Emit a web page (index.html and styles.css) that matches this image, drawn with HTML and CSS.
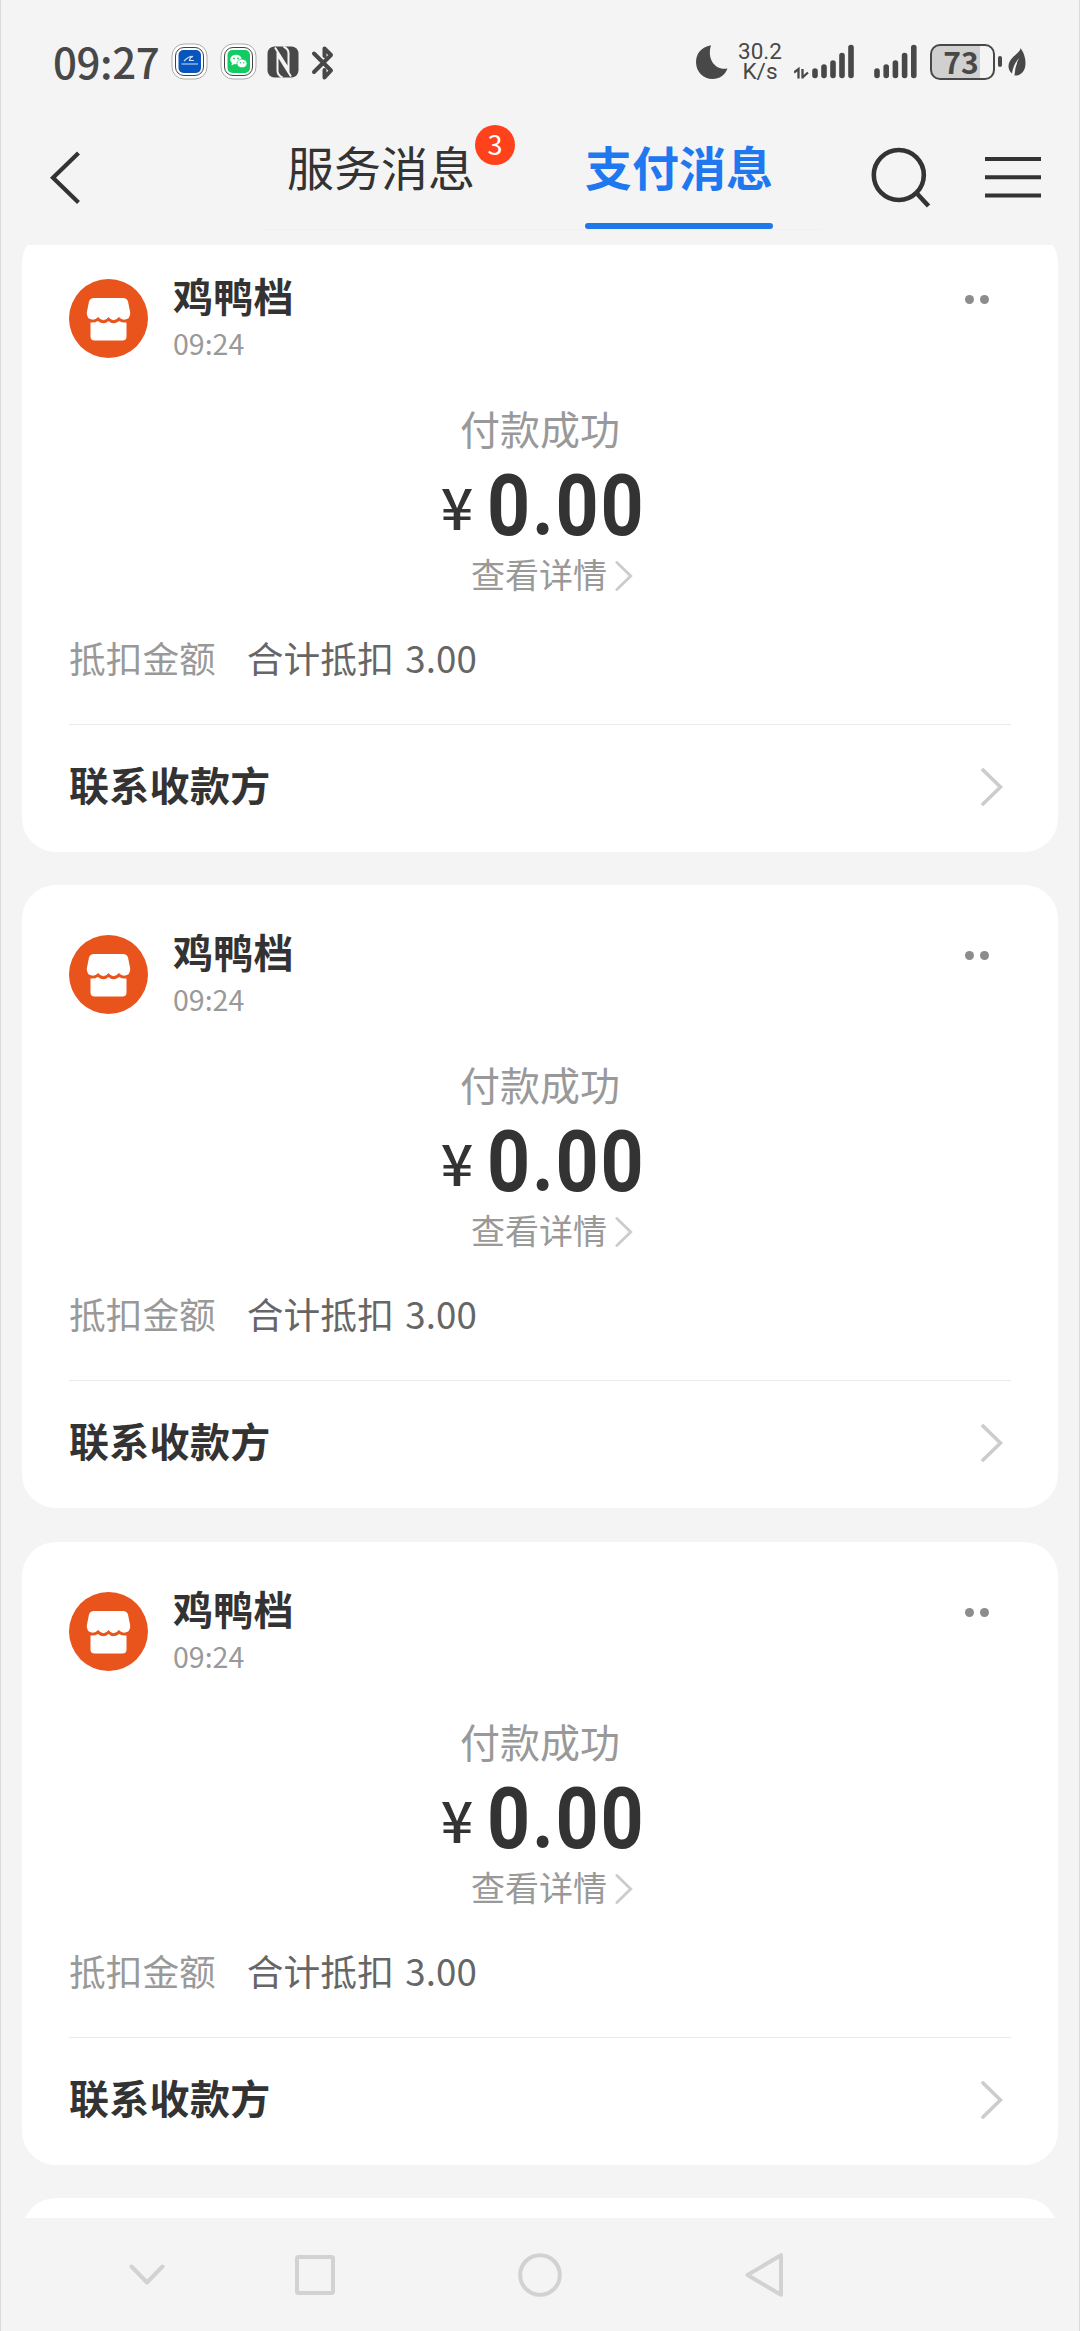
FILE: index.html
```html
<!DOCTYPE html>
<html lang="zh-CN">
<head>
<meta charset="utf-8">
<title>支付消息</title>
<link rel="stylesheet" href="styles.css">
</head>
<body>
<svg class="defs" width="0" height="0" aria-hidden="true">
  <symbol id="shop" viewBox="0 0 79 79">
    <circle cx="39.5" cy="39.5" r="39.5" fill="#e8541c"/>
    <path d="M25 19h29q4 0 5 3.500l2.200 11q.5 6.500-6 7.300-3 0-5.300-2.800-2.400 3.200-5.400 3.200t-5-3.200q-2 3.200-5 3.200t-5.400-3.200q-2.300 2.800-5.300 2.800-6.500-.8-6-7.300l2.200-11q1-3.500 5-3.500z" fill="#fff"/>
    <path d="M21.500 43.500q4.500.5 7.300-1.500 3 2.200 5.700 2.200t5-2.200q2.300 2.200 5 2.200t5.700-2.200q2.800 2 7.300 1.500v14q0 4-4 4h-28q-4 0-4-4z" fill="#fff"/>
  </symbol>
  <symbol id="arrow" viewBox="0 0 22 38">
    <path d="M2 2l17.500 17L2 36" fill="none" stroke="#ccc" stroke-width="3.600" stroke-linecap="round"/>
  </symbol>
</svg>
<div class="phone">
  <div class="status">
    <span class="clock">09:27</span>
    <svg class="app app-blue" width="37" height="37" viewBox="0 0 37 37">
      <rect x="1" y="1" width="35" height="35" rx="12" fill="#fff" stroke="#aaa"/>
      <rect x="4.500" y="4.500" width="28" height="28" rx="8.500" fill="#fff" stroke="#444"/>
      <rect x="7.500" y="7" width="22.500" height="23" rx="5" fill="#0756c0"/>
      <path d="M13 18q5-5 9-4.500-3 .5-3.500 4h4.500M10.500 21h16.500" fill="none" stroke="#cfe0f8" stroke-width="1.200"/>
    </svg>
    <svg class="app app-chat" width="37" height="37" viewBox="0 0 37 37">
      <rect x="1" y="1" width="35" height="35" rx="12" fill="#fff" stroke="#aaa"/>
      <rect x="4.500" y="4.500" width="28" height="28" rx="8.500" fill="#fff" stroke="#444"/>
      <rect x="7.500" y="7" width="22.500" height="23" rx="5" fill="#12cc63"/>
      <ellipse cx="16" cy="16.500" rx="5.700" ry="4.800" fill="#fff"/>
      <path d="M12 19l-.5 3.500 4-2z" fill="#fff"/>
      <ellipse cx="22" cy="20.500" rx="5" ry="4.300" fill="#fff" stroke="#12cc63" stroke-width=".7"/>
      <g fill="#12cc63"><circle cx="14" cy="15.500" r=".9"/><circle cx="18" cy="15.500" r=".9"/><circle cx="20.300" cy="19.800" r=".7"/><circle cx="23.700" cy="19.800" r=".7"/></g>
    </svg>
    <svg class="nfc" width="32" height="32" viewBox="0 0 32 32">
      <rect x=".5" y=".5" width="31" height="31" rx="7" fill="#484848"/>
      <path d="M8 1.500L21.500 23V7q0-4-5-6.500M24 30.500L10.500 9v16q0 4 5 6.500" fill="none" stroke="#f4f4f4" stroke-width="2"/>
    </svg>
    <svg class="bt" width="24" height="36" viewBox="0 0 24 36">
      <path d="M3 8.500l17 17-6.500 7V25M3 27L20 10l-6.500-6.500V11" fill="none" stroke="#484848" stroke-width="4" stroke-linecap="round" stroke-linejoin="round"/>
    </svg>
    <svg class="moon" width="32" height="34" viewBox="0 0 32 34">
      <path d="M15 .3C5 2 0 9 0 17c0 10 7.500 17 16.500 17 7 0 12.500-4 15-10.500C20 26 10.500 15 15 .3z" fill="#484848"/>
    </svg>
    <div class="speed"><span>30.2</span><span>K/s</span></div>
    <svg class="signal" width="61" height="35" viewBox="0 0 61 35">
      <path d="M0 28.500l4.500-3.500v9.500M8.500 25v9.500M8.500 33.500l5.500-5" fill="none" stroke="#484848" stroke-width="2.300"/>
      <g stroke="#484848" stroke-width="5.600" stroke-linecap="round"><path d="M21 27v4.500M30 23v8.500M39 19v12.500M48 11.500v20M57 3.500v28"/></g>
    </svg>
    <svg class="signal2" width="43" height="35" viewBox="0 0 43 35">
      <g stroke="#484848" stroke-width="5.600" stroke-linecap="round"><path d="M3 27v4.500M12.200 23v8.500M21.400 19v12.500M30.600 11.500v20M39.800 3.500v28"/></g>
    </svg>
    <div class="battery"><span>73</span></div>
    <i class="nub"></i>
    <svg class="leaf" width="18" height="28" viewBox="0 0 18 28">
      <path d="M12.500 0C13 5 1 9 .5 18q0 5 3.500 7.500Q5 17 11 10q-4 8-4.500 17.500C14 28 17.500 22 17.500 15q0-8-5-15z" fill="#484848"/>
    </svg>
  </div>

  <header class="header">
    <svg class="back" width="34" height="56" viewBox="0 0 34 56">
      <path d="M30.500 3L5 27.700 30.500 52.500" fill="none" stroke="#333" stroke-width="4.200"/>
    </svg>
    <nav class="tabs">
      <div class="tab">服务消息<b class="badge">3</b></div>
      <div class="tab active">支付消息</div>
    </nav>
    <svg class="search" width="62" height="62" viewBox="0 0 62 62">
      <circle cx="28.800" cy="29" r="25" fill="none" stroke="#333" stroke-width="4.600"/>
      <path d="M46 46.500L58.500 60" stroke="#333" stroke-width="4.600"/>
    </svg>
    <svg class="menu" width="56" height="42" viewBox="0 0 56 42">
      <path d="M0 3h56M0 21.300h56M0 39.500h56" stroke="#333" stroke-width="4"/>
    </svg>
  </header>

  <main class="list">
    <article class="card">
      <div class="head">
        <svg class="avatar"><use href="#shop"/></svg>
        <div class="who"><div class="name">鸡鸭档</div><div class="time">09:24</div></div>
        <div class="more"><i></i><i></i></div>
      </div>
      <div class="result">付款成功</div>
      <div class="amount"><span class="yen">¥</span><span class="num">0.00</span></div>
      <div class="detail">查看详情<svg><use href="#arrow"/></svg></div>
      <div class="deduct"><span>抵扣金额</span><span class="value">合计抵扣 3.00</span></div>
      <div class="contact"><span>联系收款方</span><svg><use href="#arrow"/></svg></div>
    </article>
    <article class="card">
      <div class="head">
        <svg class="avatar"><use href="#shop"/></svg>
        <div class="who"><div class="name">鸡鸭档</div><div class="time">09:24</div></div>
        <div class="more"><i></i><i></i></div>
      </div>
      <div class="result">付款成功</div>
      <div class="amount"><span class="yen">¥</span><span class="num">0.00</span></div>
      <div class="detail">查看详情<svg><use href="#arrow"/></svg></div>
      <div class="deduct"><span>抵扣金额</span><span class="value">合计抵扣 3.00</span></div>
      <div class="contact"><span>联系收款方</span><svg><use href="#arrow"/></svg></div>
    </article>
    <article class="card">
      <div class="head">
        <svg class="avatar"><use href="#shop"/></svg>
        <div class="who"><div class="name">鸡鸭档</div><div class="time">09:24</div></div>
        <div class="more"><i></i><i></i></div>
      </div>
      <div class="result">付款成功</div>
      <div class="amount"><span class="yen">¥</span><span class="num">0.00</span></div>
      <div class="detail">查看详情<svg><use href="#arrow"/></svg></div>
      <div class="deduct"><span>抵扣金额</span><span class="value">合计抵扣 3.00</span></div>
      <div class="contact"><span>联系收款方</span><svg><use href="#arrow"/></svg></div>
    </article>
    <article class="card"></article>
  </main>

  <footer class="sysnav">
    <svg class="hide" width="36" height="22" viewBox="0 0 36 22"><path d="M2.500 2.500L18 18.500l15.500-16"/></svg>
    <svg class="recent" width="40" height="40" viewBox="0 0 40 40"><rect x="2" y="2" width="36" height="36" rx="1.500"/></svg>
    <svg class="home" width="44" height="44" viewBox="0 0 44 44"><circle cx="22" cy="22" r="19.800"/></svg>
    <svg class="prev" width="40" height="44" viewBox="0 0 40 44"><path d="M2.500 22L36 2.200v39.600z"/></svg>
  </footer>
</div>
</body>
</html>
```
FILE: styles.css
```css
* { box-sizing: border-box; }

body {
  margin: 0;
  background: #f4f4f4;
  color: #333;
  font-family: "Noto Sans CJK SC", sans-serif;
}

svg { display: block; flex: none; }
.defs { position: absolute; }

.phone {
  display: flex;
  flex-direction: column;
  width: 1080px;
  height: 2331px;
  overflow: hidden;
  box-shadow: inset 1px 0 #dadada, inset -1px 0 #dadada;
}

/* Status bar */
.status {
  flex: none;
  display: flex;
  align-items: flex-start;
  height: 90px;
  padding: 34px 0 0 53px;
  color: #484848;
}
.clock { width: 118px; margin-top: 1px; font-size: 42px; font-weight: 500; line-height: 52px; letter-spacing: -.4px; }
.app { margin-top: 9px; }
.app-chat { margin-left: 12px; }
.nfc { margin: 12px 0 0 10px; }
.bt { margin: 11px 0 0 12px; }
.moon { margin: 11px 0 0 361px; }
.speed {
  width: 46px;
  margin: 7px 0 0 9px;
  display: flex;
  flex-direction: column;
  align-items: center;
  font: 22.500px/20px Roboto, sans-serif;
}
.signal { margin: 10px 0 0 11px; }
.signal2 { margin: 10px 0 0 19px; }
.battery {
  width: 65px;
  height: 36px;
  margin: 10px 0 0 13px;
  padding-right: 3px;
  border: 2.500px solid #484848;
  border-radius: 10px;
  background: linear-gradient(to right, #d0d0d0 48px, transparent 48px);
  font: 700 30px/30px "Noto Sans CJK SC", sans-serif;
  text-align: center;
}
.nub { width: 4px; height: 11px; margin: 22px 0 0 3px; border-radius: 2px; background: #484848; }
.leaf { margin: 14px 0 0 6px; }

/* Title bar */
.header {
  flex: none;
  display: flex;
  align-items: flex-start;
  height: 155px;
}
.back { margin: 60px 0 0 48px; }
.tabs {
  display: flex;
  width: 559px;
  height: 140px;
  margin-left: 180px;
  padding-left: 25px;
  gap: 110px;
  border-bottom: 1px solid #f0f0f0;
}
.tab {
  position: relative;
  height: 139px;
  padding-top: 46px;
  font-size: 47px;
  line-height: 60px;
}
.tab.active { color: #1f78f0; font-weight: 700; }
.tab.active::after {
  content: "";
  display: block;
  height: 6px;
  margin-top: 27px;
  border-radius: 3px;
  background: #1f78e8;
}
.badge {
  position: absolute;
  left: 188px;
  top: 35px;
  width: 40px;
  height: 40px;
  border-radius: 50%;
  background: #ff411c;
  color: #fff;
  font-size: 27px;
  font-weight: 400;
  line-height: 38px;
  text-align: center;
}
.search { margin: 56px 0 0 49px; }
.menu { margin: 66px 0 0 53px; }

/* Message cards */
.list {
  flex: none;
  height: 1973px;
  padding: 0 22.500px 0 22px;
  overflow: hidden;
}
.card {
  height: 623px;
  margin-bottom: 33.300px;
  padding: 40px 46.500px 0 47px;
  border-radius: 34px;
  background: #fff;
}
.card:first-child { margin-top: -16px; }

.head { display: flex; height: 94px; }
.avatar { width: 79px; height: 79px; margin-top: 10px; }
.who { margin-left: 25px; }
.name { font-size: 40px; font-weight: 700; line-height: 52px; letter-spacing: .3px; }
.time { padding-top: 1px; font-size: 28.500px; line-height: 42px; color: #999; }
.more { display: flex; gap: 6px; margin: 26px 22px 0 auto; }
.more i { width: 9px; height: 9px; border-radius: 50%; background: #8c8c8c; }

.result { margin-top: 36px; font-size: 40px; line-height: 58px; color: #999; text-align: center; }
.amount {
  display: flex;
  justify-content: center;
  align-items: flex-start;
  height: 76px;
  margin-top: 9px;
  padding-left: 6px;
  line-height: 76px;
}
.yen { margin-top: 1px; font-size: 57px; font-weight: 500; }
.num {
  margin: 2px -21px 0 14px;
  font-family: Roboto, sans-serif;
  font-size: 85px;
  font-weight: 700;
  letter-spacing: 2px;
  transform: scaleX(.885);
  transform-origin: left;
}
.detail {
  display: flex;
  justify-content: center;
  align-items: center;
  height: 48px;
  margin-top: 8px;
  padding-left: 24px;
  font-size: 34px;
  line-height: 48px;
  color: #999;
}
.detail svg { width: 18px; height: 30px; margin: 4px 0 0 8px; }
.deduct { display: flex; margin-top: 32px; font-size: 36.700px; line-height: 54px; color: #999; }
.value { margin-left: 31px; color: #666; word-spacing: 3px; letter-spacing: .1px; }
.contact {
  display: flex;
  justify-content: space-between;
  align-items: center;
  height: 119px;
  margin-top: 40px;
  border-top: 1px solid #ebebeb;
  font-size: 40px;
  font-weight: 700;
  letter-spacing: .3px;
}
.contact svg { width: 22px; height: 38px; margin: 6px 8px 0 0; }

/* System navigation */
.sysnav {
  flex: none;
  display: flex;
  align-items: center;
  height: 113px;
  padding-left: 128.500px;
}
.sysnav svg { fill: none; stroke: #d2d2d2; stroke-width: 4; stroke-linecap: round; stroke-linejoin: round; }
.recent { margin-left: 130px; }
.home { margin-left: 183px; }
.prev { margin-left: 183px; }
```
